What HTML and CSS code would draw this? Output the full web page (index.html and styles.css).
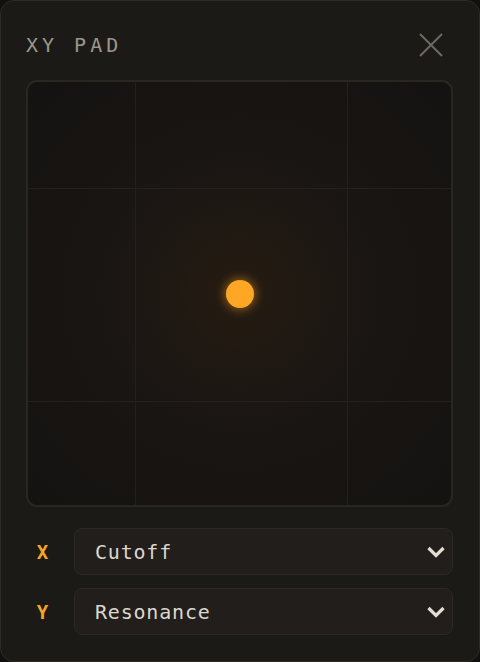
FILE: index.html
```html
<!DOCTYPE html>
<html>
<head>
<meta charset="utf-8">
<link rel="stylesheet" href="styles.css">
</head>
<body>
<div class="panel">
  <div class="header">
    <div class="title">XY PAD</div>
    <svg class="close" width="24" height="24" viewBox="0 0 24 24"><path d="M1 1 L23 23 M23 1 L1 23" stroke="#6e685f" stroke-width="2" fill="none"/></svg>
  </div>
  <div class="pad">
    <div class="dot"></div>
  </div>
  <div class="row">
    <div class="axis">X</div>
    <div class="select"><span class="value">Cutoff</span>
      <svg class="chev" width="20" height="14" viewBox="0 0 20 14"><path d="M2.5 3 L10 10.5 L17.5 3" stroke="#e2ded6" stroke-width="3.2" fill="none"/></svg>
    </div>
  </div>
  <div class="row">
    <div class="axis">Y</div>
    <div class="select"><span class="value">Resonance</span>
      <svg class="chev" width="20" height="14" viewBox="0 0 20 14"><path d="M2.5 3 L10 10.5 L17.5 3" stroke="#e2ded6" stroke-width="3.2" fill="none"/></svg>
    </div>
  </div>
</div>
</body>
</html>
```
FILE: styles.css
```css
html, body {
  margin: 0;
  padding: 0;
  background: #121110;
}
.panel {
  width: 480px;
  height: 662px;
  box-sizing: border-box;
  background: #1c1a17;
  border: 1px solid #2f2a25;
  border-radius: 14px;
  padding: 23px 26px 0 25px;
  display: flex;
  flex-direction: column;
  font-family: "DejaVu Sans Mono", "Liberation Mono", monospace;
}
.header {
  height: 42px;
  display: flex;
  align-items: center;
  justify-content: space-between;
  margin-bottom: 14px;
}
.title {
  font-size: 20px;
  letter-spacing: 4px;
  color: #9c968c;
}
.close {
  margin-right: 10px;
}
.pad {
  position: relative;
  width: 427px;
  height: 427px;
  box-sizing: border-box;
  border: 2px solid #2a2622;
  border-radius: 11px;
  background:
    linear-gradient(#24201c, #24201c) 107px 0 / 1px 100% no-repeat,
    linear-gradient(#24201c, #24201c) 319px 0 / 1px 100% no-repeat,
    linear-gradient(#24201c, #24201c) 0 106px / 100% 1px no-repeat,
    linear-gradient(#24201c, #24201c) 0 319px / 100% 1px no-repeat,
    radial-gradient(circle at 50% 50%, #251b11 0px, #221a12 40px, #1e1813 85px, #1a1613 130px, #171412 190px, #151311 300px);
  margin-bottom: 21px;
}
.dot {
  position: absolute;
  left: 197.5px;
  top: 197.5px;
  width: 28px;
  height: 28px;
  border-radius: 50%;
  background: #ffa625;
  box-shadow: 0 0 10px 2px rgba(255, 160, 30, 0.45);
}
.row {
  display: flex;
  align-items: center;
  gap: 15px;
  margin-bottom: 13px;
}
.axis {
  width: 33px;
  text-align: center;
  font-size: 19px;
  font-weight: bold;
  color: #f5a623;
}
.select {
  flex: 1;
  height: 47px;
  box-sizing: border-box;
  background: #221e1b;
  border: 1px solid #2d2824;
  border-radius: 8px;
  display: flex;
  align-items: center;
  justify-content: space-between;
  padding: 0 6px 0 20px;
}
.value {
  font-size: 20px;
  letter-spacing: 0.8px;
  color: #dcd7cf;
}
.chev {
  display: block;
}
```
